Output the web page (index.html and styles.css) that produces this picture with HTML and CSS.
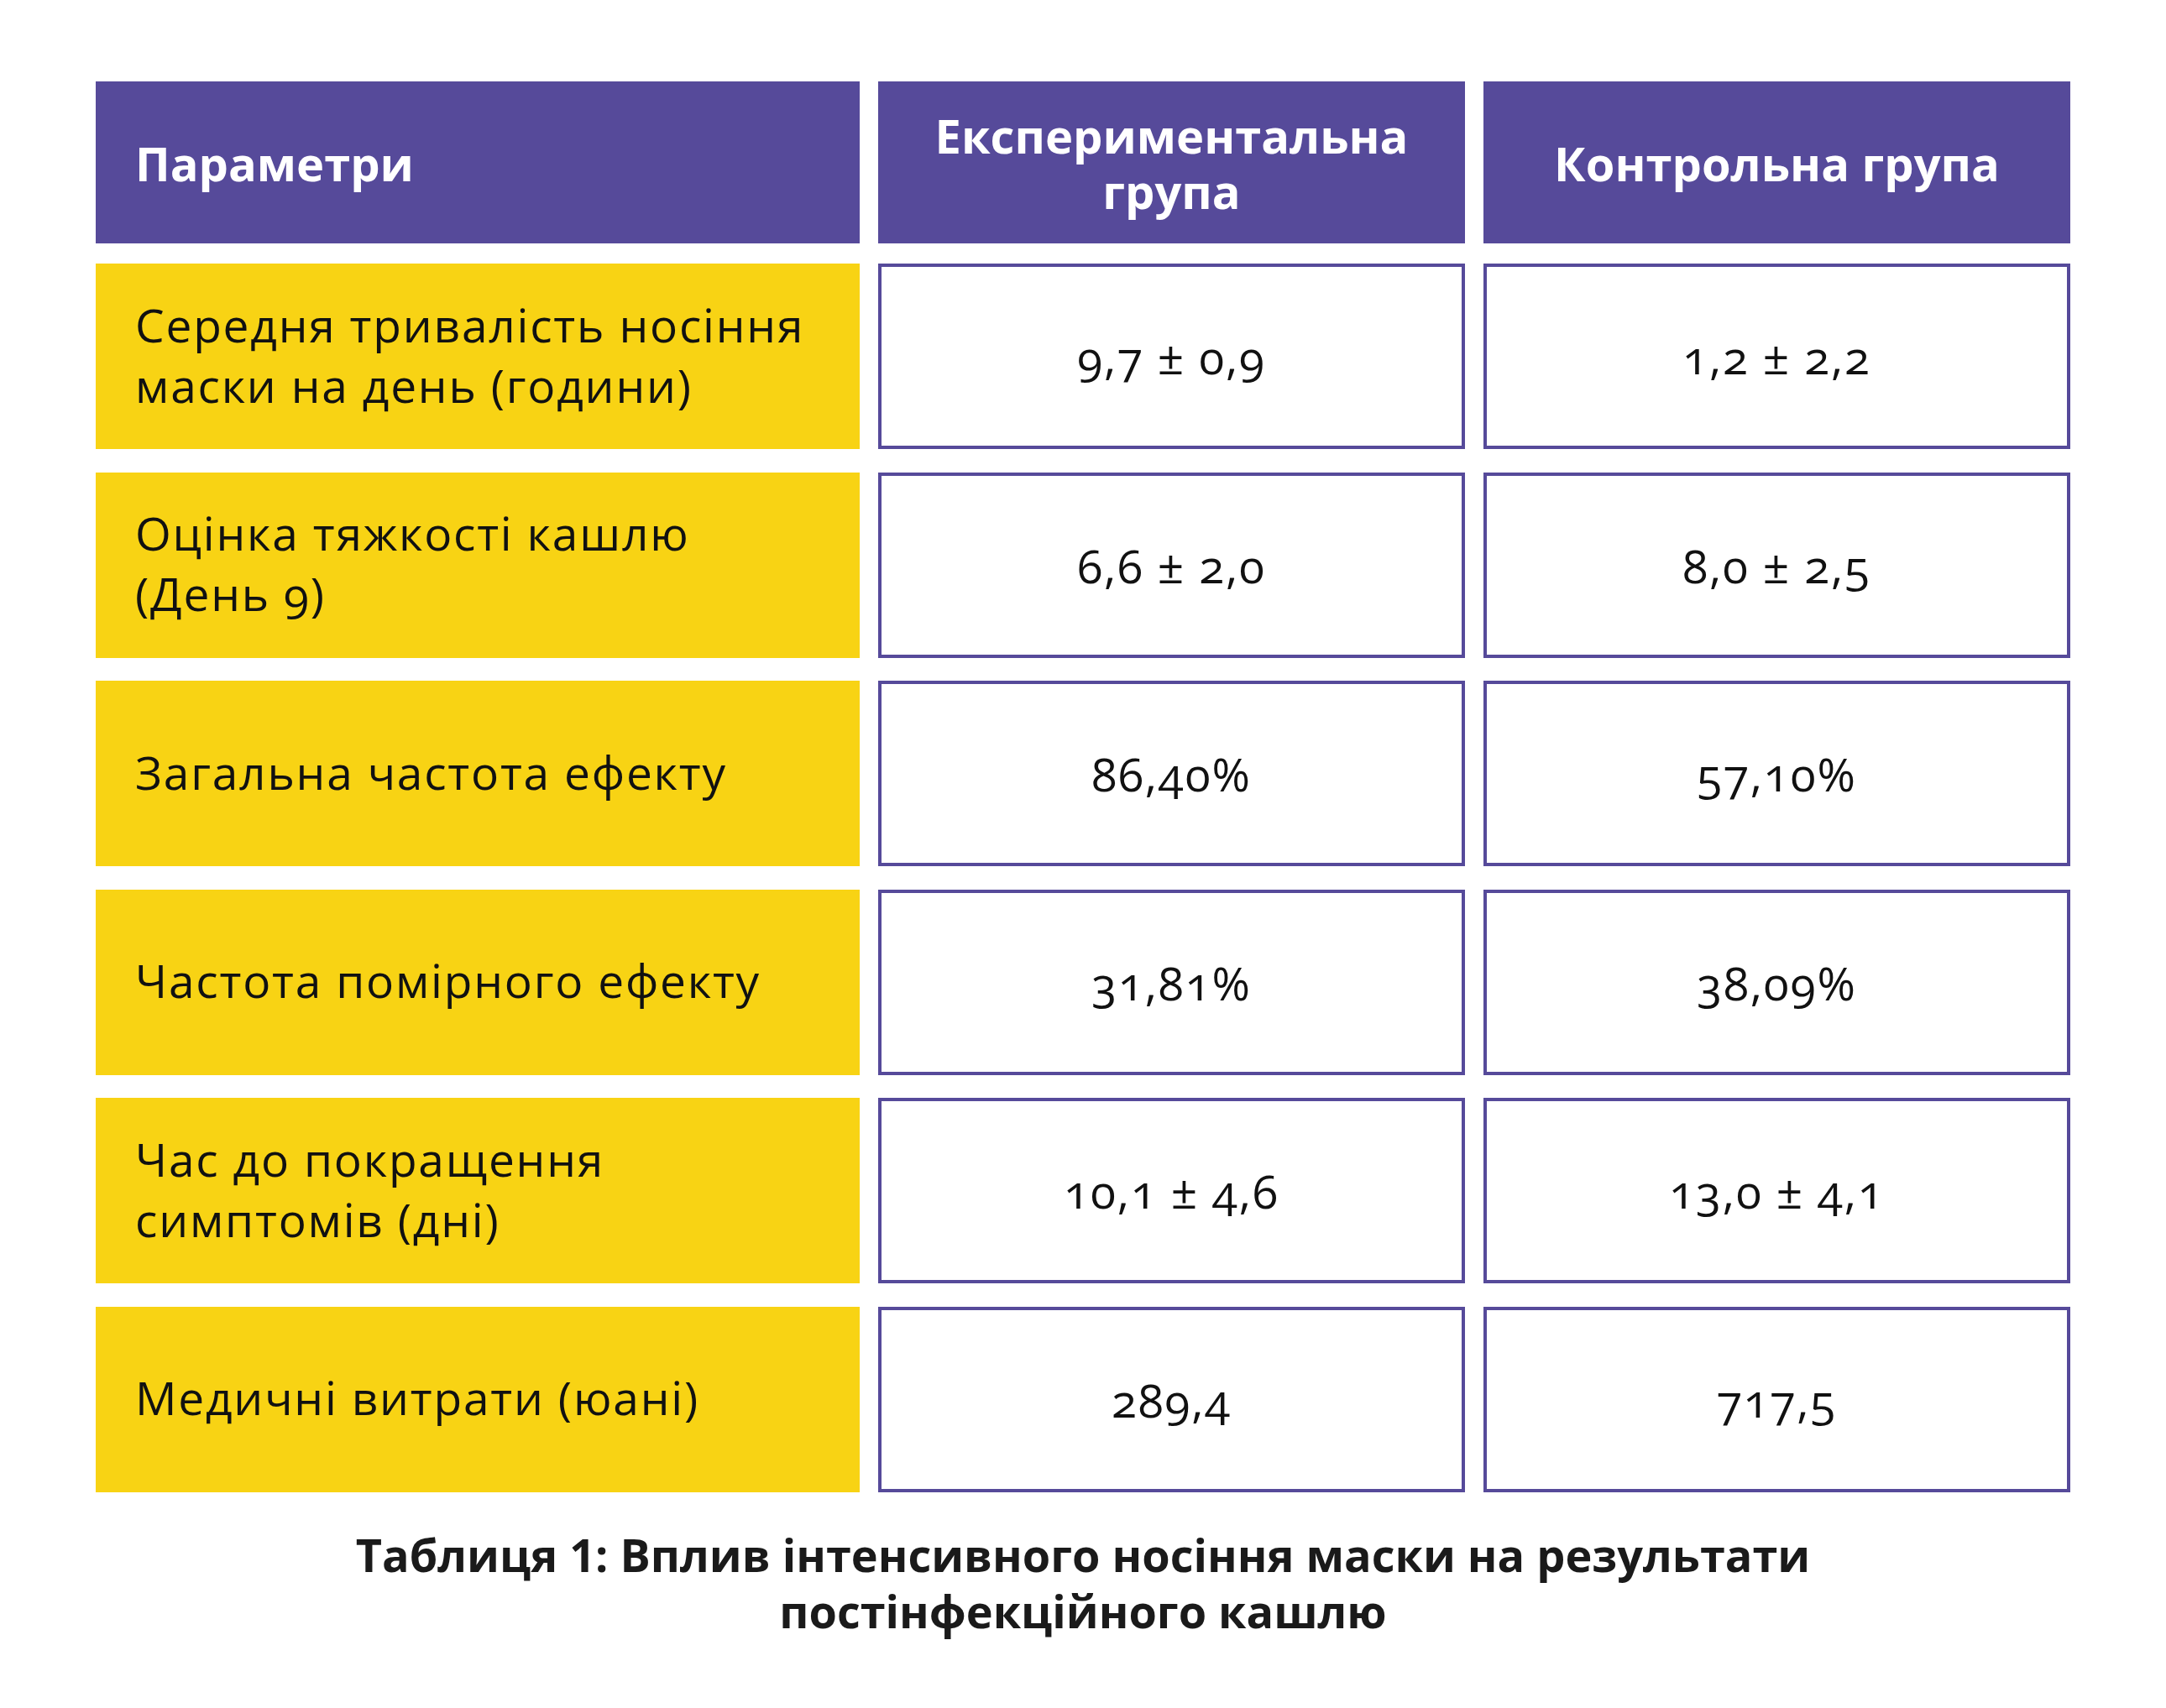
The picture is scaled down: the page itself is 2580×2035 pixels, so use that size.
FILE: index.html
```html
<!DOCTYPE html>
<html lang="uk">
<head>
<meta charset="utf-8">
<title>Таблиця 1</title>
<link rel="stylesheet" href="styles.css">
</head>
<body>
<main class="page">
  <div class="table">
    <div class="head-row">
      <div class="hcell hcell-left">Параметри</div>
      <div class="hcell hcell-stack"><span class="hline">Експериментальна</span><span class="hline">група</span></div>
      <div class="hcell">Контрольна група</div>
    </div>
    <div class="body-rows">
      <div class="param">Середня тривалість носіння<br>маски на день (години)</div>
      <div class="val">9,7 ± 0,9</div>
      <div class="val">1,2 ± 2,2</div>

      <div class="param">Оцінка тяжкості кашлю<br>(День 9)</div>
      <div class="val">6,6 ± 2,0</div>
      <div class="val">8,0 ± 2,5</div>

      <div class="param">Загальна частота ефекту</div>
      <div class="val">86,40%</div>
      <div class="val">57,10%</div>

      <div class="param">Частота помірного ефекту</div>
      <div class="val">31,81%</div>
      <div class="val">38,09%</div>

      <div class="param">Час до покращення<br>симптомів (дні)</div>
      <div class="val">10,1 ± 4,6</div>
      <div class="val">13,0 ± 4,1</div>

      <div class="param">Медичні витрати (юані)</div>
      <div class="val">289,4</div>
      <div class="val">717,5</div>
    </div>
  </div>
  <p class="caption">Таблиця 1: Вплив інтенсивного носіння маски на результати<br>постінфекційного кашлю</p>
</main>
</body>
</html>
```

FILE: styles.css
```css
html, body {
  margin: 0;
  padding: 0;
  background: #ffffff;
}

body {
  font-family: "Open Sans", "Noto Sans", sans-serif;
  color: #111111;
}

.page {
  width: 2580px;
  height: 2035px;
  box-sizing: border-box;
  padding-top: 97px;
  padding-left: 114px;
}

.table {
  width: 2352px;
}

.head-row,
.body-rows {
  display: grid;
  grid-template-columns: 910px 699px 699px;
  column-gap: 22px;
}

.head-row {
  height: 193px;
  margin-bottom: 24px;
}

.hcell {
  background: #564a9a;
  color: #ffffff;
  font-weight: 700;
  font-size: 56px;
  line-height: 66px;
  display: flex;
  align-items: center;
  justify-content: center;
  text-align: center;
}

.hcell-stack {
  flex-direction: column;
  gap: 0;
}

.hline {
  display: block;
  height: 66px;
  line-height: 66px;
}

.hcell-left {
  justify-content: flex-start;
  text-align: left;
  padding-left: 47px;
}

.body-rows {
  grid-auto-rows: 221px;
  row-gap: 27.5px;
}

.param {
  background: #f8d314;
  font-size: 55px;
  letter-spacing: 1.8px;
  line-height: 72px;
  display: flex;
  align-items: center;
  padding-left: 47px;
  padding-bottom: 4px;
  box-sizing: border-box;
  font-variant-numeric: oldstyle-nums;
}

.val {
  background: #ffffff;
  border: 4px solid #564a9a;
  box-sizing: border-box;
  font-size: 55px;
  letter-spacing: 1.8px;
  display: flex;
  align-items: center;
  justify-content: center;
  font-variant-numeric: oldstyle-nums;
}

.caption {
  margin: 41px 0 0 -114px;
  width: 2580px;
  text-align: center;
  font-weight: 700;
  font-size: 54px;
  line-height: 67px;
  color: #1a1a1a;
}
```
